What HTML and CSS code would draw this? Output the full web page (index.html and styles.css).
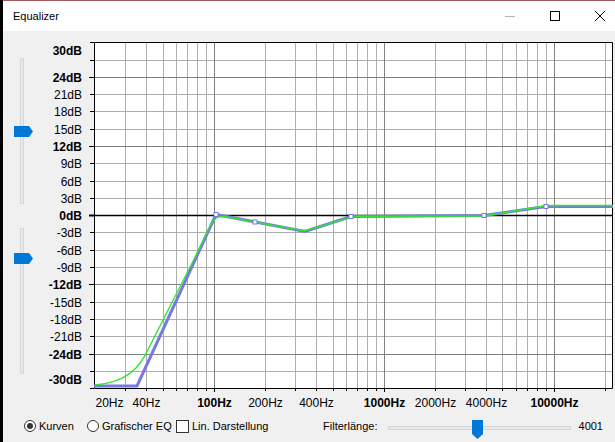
FILE: index.html
```html
<!DOCTYPE html>
<html>
<head>
<meta charset="utf-8">
<title>Equalizer</title>
<link rel="stylesheet" href="styles.css">
</head>
<body>
<div class="window">
  <div class="titlebar">
    <span class="title">Equalizer</span>
    <div class="caption">
      <span class="cb"><svg width="10" height="10" viewBox="0 0 10 10"><path class="glyph-dis" d="M0 5.5H10"/></svg></span>
      <span class="cb"><svg width="10" height="10" viewBox="0 0 10 10"><rect class="glyph" x="0.5" y="0.5" width="9" height="9"/></svg></span>
      <span class="cb"><svg width="10" height="10" viewBox="0 0 10 10"><path class="glyph" d="M0 0L10 10M10 0L0 10"/></svg></span>
    </div>
  </div>
  <div class="client">
    <div class="main">
      <div class="sliders">
        <div class="vslider">
          <div class="vtrack"></div>
          <svg class="vthumb vthumb-1" width="19" height="11" viewBox="0 0 19 11"><polygon points="0,0 15,0 19,5.5 15,11 0,11"/></svg>
        </div>
        <div class="vslider">
          <div class="vtrack"></div>
          <svg class="vthumb vthumb-2" width="19" height="11" viewBox="0 0 19 11"><polygon points="0,0 15,0 19,5.5 15,11 0,11"/></svg>
        </div>
      </div>
      <svg class="chart" width="575" height="381" viewBox="0 0 575 381">
        <rect class="plot-bg" x="54" y="11" width="519" height="346"/>
        <path class="grid-light" d="M54 29.5H573M54 63.5H573M54 80.5H573M54 98.5H573M54 132.5H573M54 150.5H573M54 167.5H573M54 201.5H573M54 219.5H573M54 236.5H573M54 271.5H573M54 288.5H573M54 305.5H573M54 340.5H573
          M85.5 11V357M106.5 11V357M123.5 11V357M136.5 11V357M147.5 11V357M157.5 11V357M166.5 11V357
          M225.5 11V357M255.5 11V357M276.5 11V357M293.5 11V357M306.5 11V357M317.5 11V357M327.5 11V357M336.5 11V357
          M395.5 11V357M425.5 11V357M446.5 11V357M462.5 11V357M476.5 11V357M487.5 11V357M497.5 11V357M506.5 11V357
          M565.5 11V357"/>
        <path class="grid-dark" d="M54 46.5H573M54 115.5H573M54 253.5H573M54 323.5H573M174.5 11V357M344.5 11V357M514.5 11V357"/>
        <path class="zero" d="M54 184.5H573"/>
        <path class="frame" d="M54.5 11.5H572.5V357.5H54.5Z"/>
        <path class="ticks" d="M50 11.5H54M50 29.5H54M49 46.5H54M50 63.5H54M50 80.5H54M50 98.5H54M49 115.5H54M50 132.5H54M50 150.5H54M50 167.5H54M50 201.5H54M50 219.5H54M50 236.5H54M49 253.5H54M50 271.5H54M50 288.5H54M50 305.5H54M49 323.5H54M50 340.5H54M50 357.5H54
          M85.5 357V360M106.5 357V360M123.5 357V360M136.5 357V360M147.5 357V360M157.5 357V360M166.5 357V360M174.5 357V361
          M225.5 357V360M255.5 357V360M276.5 357V360M293.5 357V360M306.5 357V360M317.5 357V360M327.5 357V360M336.5 357V360M344.5 357V361
          M395.5 357V360M425.5 357V360M446.5 357V360M462.5 357V360M476.5 357V360M487.5 357V360M497.5 357V360M506.5 357V360M514.5 357V361M565.5 357V360"/>
        <path class="zero-tick" d="M49 184.5H54"/>
        <g class="ylabels">
          <text class="b" x="42" y="24">30dB</text>
          <text class="b" x="42" y="50.8">24dB</text>
          <text x="42" y="67.8">21dB</text>
          <text x="42" y="84.8">18dB</text>
          <text x="42" y="102.8">15dB</text>
          <text class="b" x="42" y="119.8">12dB</text>
          <text x="42" y="136.8">9dB</text>
          <text x="42" y="154.8">6dB</text>
          <text x="42" y="171.8">3dB</text>
          <text class="b" x="42" y="188.8">0dB</text>
          <text x="42" y="205.8">-3dB</text>
          <text x="42" y="223.8">-6dB</text>
          <text x="42" y="240.8">-9dB</text>
          <text class="b" x="42" y="257.8">-12dB</text>
          <text x="42" y="275.8">-15dB</text>
          <text x="42" y="292.8">-18dB</text>
          <text x="42" y="309.8">-21dB</text>
          <text class="b" x="42" y="327.8">-24dB</text>
          <text class="b" x="42" y="353">-30dB</text>
        </g>
        <g class="xlabels">
          <text class="start" x="55.5" y="376">20Hz</text>
          <text x="106.5" y="376">40Hz</text>
          <text class="b" x="174.5" y="376">100Hz</text>
          <text x="225.5" y="376">200Hz</text>
          <text x="276.5" y="376">400Hz</text>
          <text class="b" x="344.5" y="376">1000Hz</text>
          <text x="395.5" y="376">2000Hz</text>
          <text x="446.5" y="376">4000Hz</text>
          <text class="b" x="514.5" y="376">10000Hz</text>
        </g>
        <polyline class="curve-blue" points="54,355 97,355 176,183.5 265,200.5 311,185.5 444,184.5 506,175.5 573,175.5"/>
        <polyline class="curve-green" points="55,354 65,352.6 73,350.6 82,347.2 90,342.3 96,337 100,332 104,326.2 107,320.5 120,295 135,265.5 154,228.5 168,199 173,190 177,186.3 182,185.5 188,186.3 258,198.8 265,199.6 271,198 311,186.4 318,185.4 444,185 450,184 506,174.8 512,174.5 573,174.5"/>
        <g class="handles">
          <rect x="174" y="181.5" width="4" height="4"/>
          <rect x="213" y="189" width="4" height="4"/>
          <rect x="309" y="183.5" width="4" height="4"/>
          <rect x="442" y="182.5" width="4" height="4"/>
          <rect x="504" y="173.5" width="4" height="4"/>
        </g>
      </svg>
    </div>
    <div class="controls">
      <div class="opt opt-1"><span class="radio on"></span><span>Kurven</span></div>
      <div class="opt opt-2"><span class="radio"></span><span>Grafischer EQ</span></div>
      <div class="opt"><span class="check"></span><span>Lin. Darstellung</span></div>
      <div class="filter">
        <span>Filterlänge:</span>
        <div class="hslider">
          <div class="htrack"></div>
          <svg class="hthumb" width="11" height="19" viewBox="0 0 11 19"><polygon points="0,0 11,0 11,14 5.5,19 0,14"/></svg>
        </div>
        <span>4001</span>
      </div>
    </div>
  </div>
</div>
</body>
</html>
```

FILE: styles.css
```css
html, body {
  margin: 0;
  padding: 0;
}

body {
  background: #000;
  width: 615px;
  height: 442px;
  overflow: hidden;
  font-family: "Liberation Sans", Arial, sans-serif;
  font-size: 11px;
  color: #000;
}

.window {
  margin-left: 3px;
  width: 612px;
  height: 442px;
  background: #f0f0f0;
  overflow: hidden;
}

.titlebar {
  height: 31px;
  background: #fff;
  border-top: 1px solid #a65a5a;
  display: flex;
  align-items: center;
  padding-left: 10px;
  box-sizing: border-box;
}

.title {
  font-size: 11px;
  color: #000;
}

.caption {
  margin-left: auto;
  display: flex;
  gap: 15px;
  height: 30px;
}

.cb {
  width: 30px;
  height: 30px;
  display: flex;
  align-items: center;
  justify-content: center;
}

.cb svg {
  display: block;
}

.glyph {
  fill: none;
  stroke: #000;
  stroke-width: 1;
}

.glyph-dis {
  fill: none;
  stroke: #b3b3b3;
  stroke-width: 1;
}

.client {
  height: 411px;
  background: #f0f0f0;
}

.main {
  display: flex;
  height: 381px;
}

.sliders {
  width: 37px;
  flex: none;
  padding-top: 27px;
  box-sizing: border-box;
  display: flex;
  flex-direction: column;
  gap: 24px;
}

.vslider {
  position: relative;
  margin-left: 17px;
  width: 4px;
  height: 146px;
}

.vtrack {
  width: 4px;
  height: 146px;
  box-sizing: border-box;
  border: 1px solid #d6d6d6;
  background: #e7eaea;
}

.vthumb {
  position: absolute;
  left: -6px;
  display: block;
  fill: #0078d7;
}

.vthumb-1 {
  top: 68px;
}

.vthumb-2 {
  top: 25px;
}

.chart {
  display: block;
  flex: none;
}

.plot-bg {
  fill: #fff;
}

.grid-light {
  fill: none;
  stroke: #adadad;
  stroke-width: 1;
}

.grid-dark {
  fill: none;
  stroke: #808080;
  stroke-width: 1;
}

.zero {
  fill: none;
  stroke: #000;
  stroke-width: 1.4;
}

.frame {
  fill: none;
  stroke: #000;
  stroke-width: 1;
}

.ticks {
  fill: none;
  stroke: #000;
  stroke-width: 1;
}

.zero-tick {
  fill: none;
  stroke: #000;
  stroke-width: 2;
}

.ylabels text {
  font-family: "Liberation Sans", Arial, sans-serif;
  font-size: 12px;
  text-anchor: end;
  fill: #000;
}

.xlabels text {
  font-family: "Liberation Sans", Arial, sans-serif;
  font-size: 12px;
  text-anchor: middle;
  fill: #000;
}

.xlabels text.start {
  text-anchor: start;
}

.chart text.b {
  font-weight: bold;
}

.curve-blue {
  fill: none;
  stroke: #7878e2;
  stroke-width: 3;
  stroke-linejoin: miter;
}

.curve-green {
  fill: none;
  stroke: #2ee62e;
  stroke-width: 1.4;
  stroke-linejoin: round;
}

.handles rect {
  fill: #fff;
  stroke: #7878e2;
  stroke-width: 1;
}

.controls {
  height: 28px;
  display: flex;
  align-items: center;
  padding-left: 21px;
}

.opt {
  display: flex;
  align-items: center;
  gap: 3px;
}

.opt-1 {
  width: 63px;
}

.opt-2 {
  width: 89px;
}

.radio {
  width: 12px;
  height: 12px;
  box-sizing: border-box;
  border: 1px solid #333;
  border-radius: 50%;
  background: #fff;
  display: flex;
  align-items: center;
  justify-content: center;
}

.radio.on::after {
  content: "";
  width: 6px;
  height: 6px;
  border-radius: 50%;
  background: #333;
}

.check {
  width: 13px;
  height: 13px;
  box-sizing: border-box;
  border: 1px solid #333;
  background: #fff;
}

.filter {
  margin-left: auto;
  padding-right: 12px;
  display: flex;
  align-items: center;
}

.hslider {
  position: relative;
  width: 183px;
  height: 4px;
  margin: 4px 8px 0 10px;
}

.htrack {
  width: 183px;
  height: 4px;
  box-sizing: border-box;
  border: 1px solid #d6d6d6;
  background: #e7eaea;
}

.hthumb {
  position: absolute;
  left: 84px;
  top: -6px;
  display: block;
  fill: #0078d7;
}
```
